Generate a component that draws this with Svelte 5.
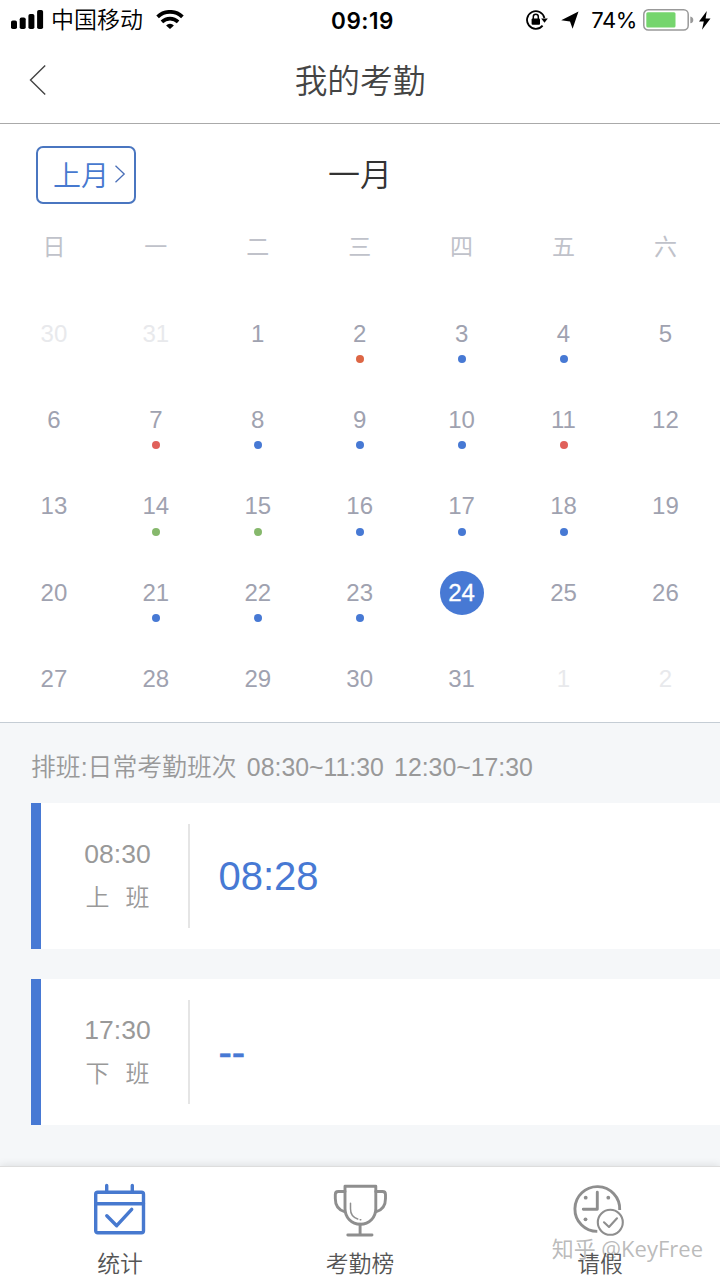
<script>
    const weekdays = ["日", "一", "二", "三", "四", "五", "六"];
    const today = 24;

    // 日付ごとの打刻状態
    const marks = {
        2: "orange", 3: "blue", 4: "blue",
        7: "red", 8: "blue", 9: "blue", 10: "blue", 11: "red",
        14: "green", 15: "green", 16: "blue", 17: "blue", 18: "blue",
        21: "blue", 22: "blue", 23: "blue",
    };

    // 前月2日分 + 1月 + 翌月2日分
    const days = Array.from({ length: 35 }, (_, i) => {
        if (i < 2) return { day: 30 + i, outside: true };
        if (i > 32) return { day: i - 32, outside: true };
        return { day: i - 1, outside: false, mark: marks[i - 1] };
    });

    const shifts = [
        { time: "08:30", first: "上", punched: "08:28" },
        { time: "17:30", first: "下", punched: "--" },
    ];

    let tab = $state("统计");
</script>

<main class="app">
    <div class="status">
        <div class="status-left">
            <svg width="33" height="20" viewBox="0 0 33 20">
                <rect x="0" y="10.5" width="6" height="8.5" rx="1.8" />
                <rect x="8.7" y="7.5" width="6" height="11.5" rx="1.8" />
                <rect x="17.4" y="4" width="6" height="15" rx="1.8" />
                <rect x="26.1" y="0" width="6" height="19" rx="1.8" />
            </svg>
            <span class="carrier">中国移动</span>
            <svg width="28" height="20" viewBox="0 0 28 20" fill="none" stroke="#000">
                <path d="M1.6 6.8a18 18 0 0 1 24.8 0" stroke-width="3.8" />
                <path d="M5.9 11.9a11.6 11.6 0 0 1 16.2 0" stroke-width="3.6" />
                <path d="M14 19l-3.9-3.6a5.4 5.4 0 0 1 7.8 0z" fill="#000" stroke="none" />
            </svg>
        </div>
        <div class="clock">09:19</div>
        <div class="status-right">
            <svg width="22" height="22" viewBox="0 0 22 22" fill="none" stroke="#000" stroke-width="1.8">
                <path d="M18.4 9A8.8 8.8 0 1 0 16.6 16.6" />
                <path d="M15.2 9.4h6.6l-3.3 4.4z" fill="#000" stroke="none" />
                <rect x="5.6" y="9.5" width="8.4" height="6.3" rx="1" fill="#000" stroke="none" />
                <path d="M7.3 10V7.8a2.5 2.5 0 0 1 5 0V10" stroke-width="1.5" />
            </svg>
            <svg class="arrow" width="18" height="18" viewBox="0 0 18 18">
                <path d="M17.5.4L11.6 17.8 9 10.4.2 9.2z" />
            </svg>
            <span class="percent">74%</span>
            <svg width="52" height="22" viewBox="0 0 52 22">
                <rect x=".8" y=".8" width="44.4" height="20.2" rx="4.5" fill="#fff" stroke="#999" stroke-width="1.5" />
                <rect x="3.3" y="3.2" width="29.2" height="15.4" rx="1.5" fill="#75d56d" />
                <path d="M47.3 7.5q3 .8 3 3.4t-3 3.4z" fill="#999" />
            </svg>
            <svg class="bolt" width="12" height="19" viewBox="0 0 12 19">
                <path d="M7.8 0L0 10.6h4.8L3 18.8 11.5 7.6H6.6z" />
            </svg>
        </div>
    </div>

    <header class="nav">
        <svg width="18" height="32" viewBox="0 0 18 32" fill="none" stroke="#444" stroke-width="1.4">
            <path d="M16.2 1.5L1.5 16l14.7 14.5" />
        </svg>
        <h1>我的考勤</h1>
    </header>

    <section class="calendar">
        <div class="month">
            <button class="prev">
                上月
                <svg width="12" height="20" viewBox="0 0 12 20" fill="none" stroke="#4a6fb8" stroke-width="1.3">
                    <path d="M1.5 1.8l8.7 8.2-8.7 8.2" />
                </svg>
            </button>
            <h2>一月</h2>
        </div>
        <div class="grid weekdays">
            {#each weekdays as name}
                <span>{name}</span>
            {/each}
        </div>
        <div class="grid days">
            {#each days as d}
                <div class="cell" class:outside={d.outside}>
                    <span class="num" class:today={!d.outside && d.day === today}>{d.day}</span>
                    <i class="dot {d.mark ?? ''}"></i>
                </div>
            {/each}
        </div>
    </section>

    <section class="records">
        <p class="plan">排班:日常考勤班次 08:30~11:30 12:30~17:30</p>
        {#each shifts as s}
            <div class="card">
                <div class="shift">
                    <span class="shift-time">{s.time}</span>
                    <span class="shift-name"><b>{s.first}</b><b>班</b></span>
                </div>
                <div class="punched" class:empty={s.punched === "--"}>{s.punched}</div>
            </div>
        {/each}
    </section>

    <nav class="tabs">
        <button class="tab" class:active={tab === "统计"} onclick={() => (tab = "统计")}>
            <svg width="60" height="60" viewBox="0 0 60 60">
                <rect x="5.7" y="12.2" width="47.8" height="40.6" rx="2" />
                <path d="M5.7 23.7h47.8M16.7 5.5v6.500M42.3 5.5v6.500" />
                <path d="M16.8 35.7l9.9 10 15-16.4" />
            </svg>
            <span>统计</span>
        </button>
        <button class="tab" class:active={tab === "考勤榜"} onclick={() => (tab = "考勤榜")}>
            <svg width="60" height="60" viewBox="0 0 60 60">
                <path d="M15 6.3h30.8v22.2c0 9-6.5 15.8-15.4 15.8S15 37.5 15 28.5z" />
                <path d="M15 11.5H8.3q-3 0-3 3v4c0 6.8 3.5 11.5 9.2 13.2M45.8 11.5h6.7q3 0 3 3v4c0 6.8-3.5 11.5-9.2 13.2" />
                <path d="M30.1 44.3V55M17.8 55H42" />
                <path d="M20.5 23.3V29c0 5 2.8 8.5 7.2 10M30.2 39.8h.6" stroke-width="1.5" />
            </svg>
            <span>考勤榜</span>
        </button>
        <button class="tab" class:active={tab === "请假"} onclick={() => (tab = "请假")}>
            <svg width="60" height="60" viewBox="0 0 60 60">
                <path class="ring" d="M49.7 30A22.4 22.4 0 1 0 27.3 51.4" />
                <path d="M27.3 12.3v17h-14" />
                <circle class="pip" cx="15.7" cy="17.7" r="1.9" />
                <circle class="pip" cx="38.3" cy="17.7" r="1.9" />
                <circle class="pip" cx="15.5" cy="39.3" r="1.9" />
                <circle class="thin" cx="40.3" cy="42.3" r="12.5" />
                <path class="thin" d="M34 42.3l5 4.700 8-8.700" />
            </svg>
            <span>请假</span>
        </button>
        <div class="watermark">知乎 @KeyFree</div>
    </nav>
</main>

<style>
    :global(body) {
        margin: 0;
        background: #fff;
    }
    .app {
        width: 720px;
        height: 1281px;
        display: flex;
        flex-direction: column;
        overflow: hidden;
        font-family: "Liberation Sans", "Noto Sans CJK SC", sans-serif;
        font-weight: 350;
        color: #999;
    }
    h1,
    h2,
    p {
        margin: 0;
        font-weight: 350;
    }
    button {
        font: inherit;
        background: none;
        border: 0;
        padding: 0;
    }
    svg {
        display: block;
        flex: none;
    }
    .status {
        height: 40px;
        display: grid;
        grid-template-columns: 1fr auto 1fr;
        align-items: center;
        color: #000;
        font-family: Inter, "Noto Sans CJK SC", sans-serif;
        font-size: 22px;
        font-weight: 400;
    }
    .status-left,
    .status-right {
        display: flex;
        align-items: center;
    }
    .status-left {
        padding-left: 11px;
    }
    .carrier {
        font-size: 23px;
        font-weight: 350;
        line-height: 40px;
        margin: 0 13px 0 7px;
    }
    .clock {
        font-size: 22.5px;
        font-weight: 600;
        letter-spacing: 0.5px;
        padding-left: 5px;
    }
    .status-right {
        justify-content: flex-end;
        padding-right: 9px;
    }
    .arrow {
        margin: 0 12px 0 13px;
    }
    .percent {
        font-size: 22px;
        letter-spacing: -0.4px;
        margin-right: 6px;
    }
    .bolt {
        margin-left: 4px;
    }
    .nav {
        height: 83px;
        border-bottom: 1px solid #aaa;
        display: grid;
        grid-template-columns: 60px 1fr 60px;
        align-items: center;
    }
    .nav svg {
        margin-left: 29px;
        margin-bottom: 4px;
    }
    h1 {
        font-size: 32.7px;
        line-height: 80px;
        text-align: center;
        color: #444;
    }
    .month {
        height: 80px;
        padding: 0 36px;
        display: grid;
        grid-template-columns: 100px 1fr 100px;
        align-items: end;
    }
    .prev {
        box-sizing: border-box;
        height: 58px;
        border: 2px solid #4a76c0;
        border-radius: 7px;
        display: flex;
        align-items: center;
        gap: 5px;
        padding-left: 15px;
        padding-bottom: 2px;
        font-size: 28px;
        color: #4779cf;
    }
    h2 {
        font-size: 32px;
        line-height: 58px;
        text-align: center;
        color: #333;
    }
    .grid {
        display: grid;
        grid-template-columns: repeat(7, 1fr);
        padding: 0 3.6px 0 3px;
        text-align: center;
    }
    .weekdays {
        height: 86px;
        line-height: 87px;
        font-size: 23px;
        font-weight: 400;
        color: #c0c2ca;
    }
    .days {
        grid-auto-rows: 86.4px;
        border-bottom: 1.5px solid #c5cdd5;
    }
    .cell {
        display: flex;
        flex-direction: column;
        align-items: center;
        padding-top: 21.6px;
    }
    .num {
        width: 44px;
        height: 44px;
        line-height: 44px;
        border-radius: 50%;
        font-size: 24px;
        color: #9fa2b0;
    }
    .outside .num {
        color: #e8e9ec;
    }
    .today {
        background: #4779d4;
        color: #fff;
        -webkit-text-stroke: 0.3px #fff;
    }
    .cell .today {
        color: #fff;
    }
    .dot {
        width: 8px;
        height: 8px;
        margin-top: -0.5px;
        border-radius: 50%;
    }
    .blue {
        background: #4779d4;
    }
    .orange {
        background: #dd6645;
    }
    .red {
        background: #e0605a;
    }
    .green {
        background: #86b86c;
    }
    .records {
        flex: 1;
        background: #f5f7f9;
        padding-left: 31px;
    }
    .plan {
        height: 79.6px;
        line-height: 90px;
        font-size: 24.85px;
        word-spacing: 3.3px;
        white-space: nowrap;
    }
    .card {
        box-sizing: border-box;
        height: 146px;
        margin-bottom: 30.6px;
        padding: 21px 0;
        background: #fff;
        border-left: 10px solid #4779d4;
        display: flex;
    }
    .shift {
        box-sizing: border-box;
        width: 149px;
        border-right: 2px solid #e5e5e5;
        display: flex;
        flex-direction: column;
        align-items: center;
        padding-left: 6px;
    }
    .shift-time {
        font-size: 26.5px;
        line-height: 42px;
        margin-top: 9px;
    }
    .shift-name {
        display: flex;
        gap: 16px;
        font-size: 24px;
        line-height: 45px;
    }
    .shift-name b {
        font-weight: 350;
    }
    .punched {
        padding-left: 28.5px;
        line-height: 104px;
        font-size: 40px;
        color: #4779d4;
    }
    .empty {
        -webkit-text-stroke: 0.6px #4779d4;
    }
    .tabs {
        position: relative;
        height: 114px;
        background: #fff;
        border-top: 1px solid #ddd;
        box-shadow: 0 -1px 8px rgba(0, 0, 0, 0.1);
        display: grid;
        grid-template-columns: repeat(3, 1fr);
    }
    .tab {
        display: flex;
        flex-direction: column;
        align-items: center;
        padding-top: 13px;
        font-size: 22.8px;
        color: #555;
    }
    .tab svg {
        fill: none;
        stroke: #8e8e8e;
        stroke-width: 2.9;
        stroke-linecap: round;
        stroke-linejoin: round;
    }
    .tab.active svg {
        stroke: #4779cf;
        stroke-width: 3.4;
    }
    .tab .ring {
        stroke-linecap: butt;
    }
    .tab .pip {
        fill: #8e8e8e;
        stroke: none;
    }
    .tab .thin {
        stroke-width: 2.1;
    }
    .tab span {
        position: relative;
        z-index: 1;
        line-height: 48px;
    }
    .watermark {
        position: absolute;
        right: 17px;
        top: 65px;
        font-family: "Open Sans", "Noto Sans CJK SC", sans-serif;
        font-size: 22px;
        font-weight: 400;
        line-height: 32px;
        color: rgba(175, 175, 175, 0.85);
        white-space: nowrap;
        pointer-events: none;
    }
</style>
